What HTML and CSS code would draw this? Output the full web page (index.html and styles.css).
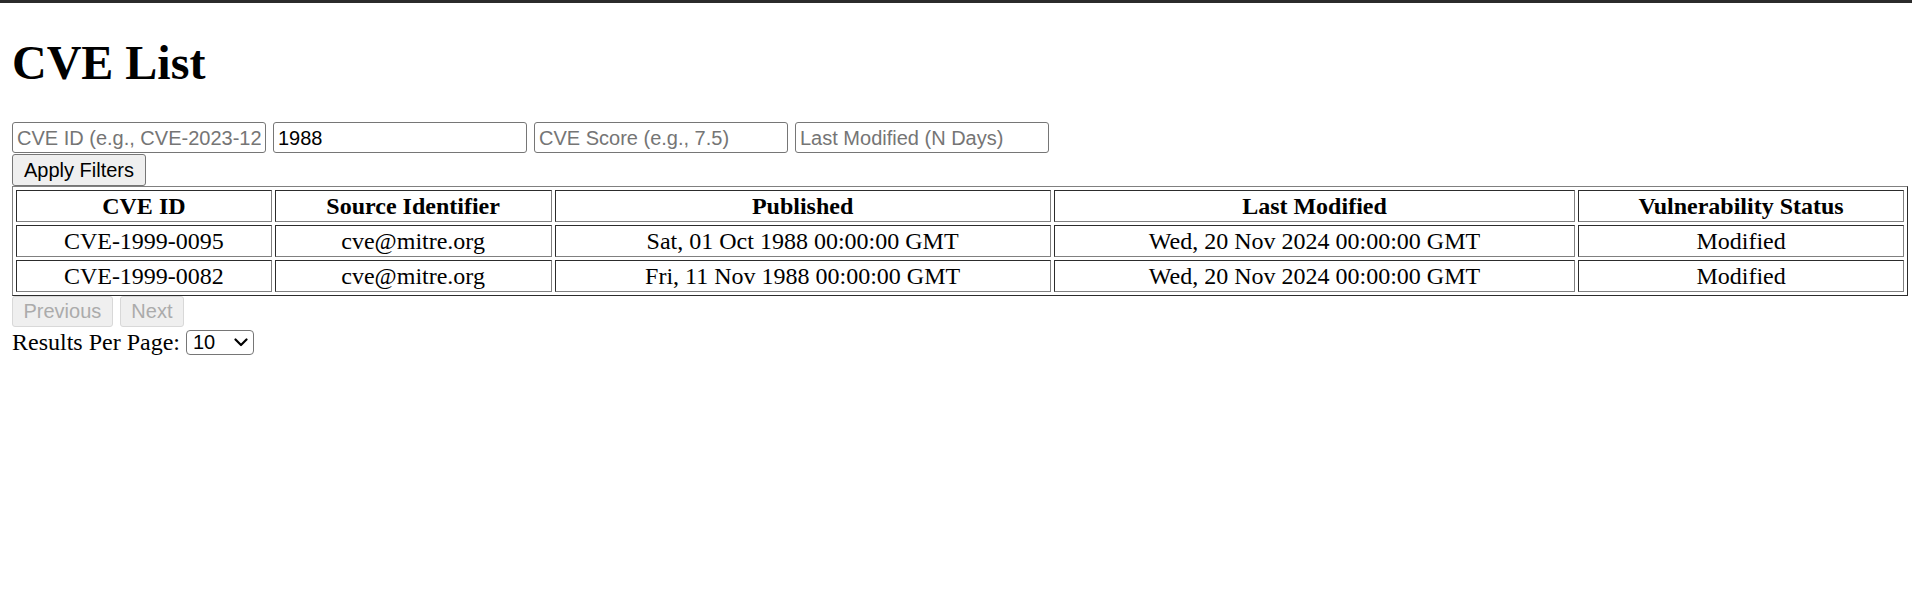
FILE: index.html
```html
<!DOCTYPE html>
<html lang="en">
<head>
<meta charset="utf-8">
<title>CVE List</title>
<link rel="stylesheet" href="styles.css">
</head>
<body>
<div class="topbar"></div>
<main class="page">
  <h1 class="title">CVE List</h1>
  <div class="filters">
    <div class="filter-inputs">
      <input class="field" type="text" placeholder="CVE ID (e.g., CVE-2023-1234)">
      <input class="field" type="text" placeholder="Year (e.g., 2023)" value="1988">
      <input class="field" type="text" placeholder="CVE Score (e.g., 7.5)">
      <input class="field" type="text" placeholder="Last Modified (N Days)">
    </div>
    <div class="filter-actions">
      <button class="btn btn-apply" type="button">Apply Filters</button>
    </div>
  </div>
  <table class="cve-table">
    <thead>
      <tr>
        <th>CVE ID</th>
        <th>Source Identifier</th>
        <th>Published</th>
        <th>Last Modified</th>
        <th>Vulnerability Status</th>
      </tr>
    </thead>
    <tbody>
      <tr>
        <td>CVE-1999-0095</td>
        <td>cve@mitre.org</td>
        <td>Sat, 01 Oct 1988 00:00:00 GMT</td>
        <td>Wed, 20 Nov 2024 00:00:00 GMT</td>
        <td>Modified</td>
      </tr>
      <tr>
        <td>CVE-1999-0082</td>
        <td>cve@mitre.org</td>
        <td>Fri, 11 Nov 1988 00:00:00 GMT</td>
        <td>Wed, 20 Nov 2024 00:00:00 GMT</td>
        <td>Modified</td>
      </tr>
    </tbody>
  </table>
  <div class="pager">
    <button class="btn btn-page" type="button" disabled>Previous</button>
    <button class="btn btn-page" type="button" disabled>Next</button>
  </div>
  <div class="per-page">
    <span class="per-page-label">Results Per Page:</span>
    <span class="select-wrap">
      <select class="select">
        <option selected>10</option>
        <option>20</option>
        <option>50</option>
      </select>
      <svg class="chevron" width="14" height="9" viewBox="0 0 14 9" aria-hidden="true">
        <path d="M1.5 1.5 L7 7 L12.5 1.5" fill="none" stroke="#000" stroke-width="2.2" stroke-linecap="round" stroke-linejoin="round"/>
      </svg>
    </span>
  </div>
</main>
</body>
</html>
```

FILE: styles.css
```css
html, body {
  margin: 0;
  padding: 0;
  background: #ffffff;
}

body {
  font-family: "Liberation Serif", "Times New Roman", serif;
  font-size: 24px;
  color: #000000;
}

.topbar {
  height: 3px;
  background: #2b2b2b;
}

.page {
  padding: 0 4px 0 12px;
}

.title {
  font-size: 48px;
  font-weight: bold;
  line-height: 55px;
  margin: 32px 0 32px 0;
}

.filters {
  display: flex;
  flex-direction: column;
  align-items: flex-start;
}

.filter-inputs {
  display: flex;
  gap: 7px;
  height: 32px;
  align-items: flex-start;
}

.field {
  box-sizing: border-box;
  width: 254px;
  height: 31px;
  margin: 0;
  padding: 1px 4px 0 4px;
  border: 1px solid #767676;
  border-radius: 3px;
  font-family: "Liberation Sans", Arial, sans-serif;
  font-size: 20px;
  color: #000000;
  background: #ffffff;
  outline: none;
}

.field::placeholder {
  color: #757575;
  opacity: 1;
}

.filter-actions {
  display: flex;
}

.btn {
  box-sizing: border-box;
  height: 32px;
  margin: 0;
  padding: 0 9px;
  border: 1px solid #767676;
  border-radius: 3px;
  background: #efefef;
  font-family: "Liberation Sans", Arial, sans-serif;
  font-size: 20px;
  color: #000000;
}

.btn-apply {
  padding: 0 11px;
}

.cve-table {
  width: 100%;
  border: 1px outset grey;
  border-spacing: 3px;
  margin: 0;
}

.cve-table th,
.cve-table td {
  border: 1px inset grey;
  padding: 1.5px;
  line-height: 27px;
  text-align: center;
}

.cve-table th {
  font-weight: bold;
}

.pager {
  display: flex;
  gap: 7px;
  margin-top: 0;
}

.btn-page {
  height: 31px;
  padding: 0 10.5px;
  background: #efefef;
  border-color: #d8d8d8;
  color: #ababab;
}

.per-page {
  display: flex;
  align-items: center;
  height: 30px;
  gap: 6px;
}

.per-page-label {
  line-height: 27px;
}

.select-wrap {
  position: relative;
  display: inline-flex;
}

.select {
  appearance: none;
  -webkit-appearance: none;
  box-sizing: border-box;
  width: 68px;
  height: 25px;
  margin: 0;
  padding: 0 0 0 6px;
  border: 1px solid #767676;
  border-radius: 4px;
  background: #ffffff;
  font-family: "Liberation Sans", Arial, sans-serif;
  font-size: 20px;
  line-height: 23px;
  color: #000000;
}

.chevron {
  position: absolute;
  right: 6px;
  top: 8px;
  pointer-events: none;
}
```
